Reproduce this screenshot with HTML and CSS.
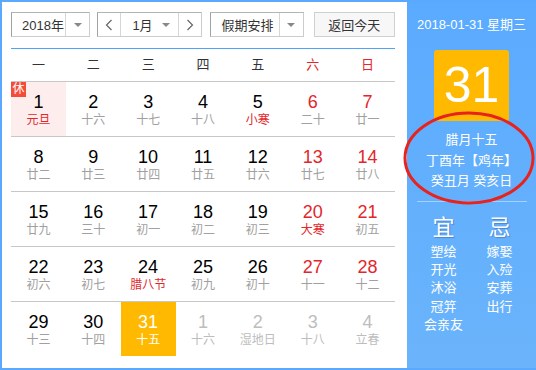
FILE: index.html
```html
<!DOCTYPE html>
<html>
<head>
  <title>万年历</title>
  <link rel="stylesheet" href="styles.css">
</head>
<body>
  <div class="frame">
    <div class="main">
      <div class="toolbar">
        <div class="select year-select">
          <span class="select-label">2018年</span>
          <span class="select-arrow"><i class="caret"></i></span>
        </div>
        <div class="select month-select">
          <span class="nav-btn">
            <svg width="8" height="12" viewBox="0 0 8 12"><polyline points="6.5,1 1.5,6 6.5,11" fill="none" stroke="#666" stroke-width="1.2"/></svg>
          </span>
          <span class="select-label month-label">1月<i class="caret"></i></span>
          <span class="nav-btn">
            <svg width="8" height="12" viewBox="0 0 8 12"><polyline points="1.5,1 6.5,6 1.5,11" fill="none" stroke="#666" stroke-width="1.2"/></svg>
          </span>
        </div>
        <div class="select holiday-select">
          <span class="select-label">假期安排</span>
          <span class="select-arrow"><i class="caret"></i></span>
        </div>
        <button class="today-btn">返回今天</button>
      </div>

      <div class="week-head">
        <span>一</span><span>二</span><span>三</span><span>四</span><span>五</span>
        <span class="red">六</span><span class="red">日</span>
      </div>

      <div class="days">
        <div class="row">
          <div class="cell holiday"><span class="badge">休</span><b>1</b><em class="red">元旦</em></div>
          <div class="cell"><b>2</b><em>十六</em></div>
          <div class="cell"><b>3</b><em>十七</em></div>
          <div class="cell"><b>4</b><em>十八</em></div>
          <div class="cell"><b>5</b><em class="red">小寒</em></div>
          <div class="cell weekend"><b>6</b><em>二十</em></div>
          <div class="cell weekend"><b>7</b><em>廿一</em></div>
        </div>
        <div class="row">
          <div class="cell"><b>8</b><em>廿二</em></div>
          <div class="cell"><b>9</b><em>廿三</em></div>
          <div class="cell"><b>10</b><em>廿四</em></div>
          <div class="cell"><b>11</b><em>廿五</em></div>
          <div class="cell"><b>12</b><em>廿六</em></div>
          <div class="cell weekend"><b>13</b><em>廿七</em></div>
          <div class="cell weekend"><b>14</b><em>廿八</em></div>
        </div>
        <div class="row">
          <div class="cell"><b>15</b><em>廿九</em></div>
          <div class="cell"><b>16</b><em>三十</em></div>
          <div class="cell"><b>17</b><em>初一</em></div>
          <div class="cell"><b>18</b><em>初二</em></div>
          <div class="cell"><b>19</b><em>初三</em></div>
          <div class="cell weekend"><b>20</b><em class="red">大寒</em></div>
          <div class="cell weekend"><b>21</b><em>初五</em></div>
        </div>
        <div class="row">
          <div class="cell"><b>22</b><em>初六</em></div>
          <div class="cell"><b>23</b><em>初七</em></div>
          <div class="cell"><b>24</b><em class="red">腊八节</em></div>
          <div class="cell"><b>25</b><em>初九</em></div>
          <div class="cell"><b>26</b><em>初十</em></div>
          <div class="cell weekend"><b>27</b><em>十一</em></div>
          <div class="cell weekend"><b>28</b><em>十二</em></div>
        </div>
        <div class="row">
          <div class="cell"><b>29</b><em>十三</em></div>
          <div class="cell"><b>30</b><em>十四</em></div>
          <div class="cell today"><b>31</b><em>十五</em></div>
          <div class="cell other"><b>1</b><em>十六</em></div>
          <div class="cell other"><b>2</b><em>湿地日</em></div>
          <div class="cell other"><b>3</b><em>十八</em></div>
          <div class="cell other"><b>4</b><em>立春</em></div>
        </div>
      </div>
    </div>

    <div class="side">
      <div class="side-date">2018-01-31 星期三</div>
      <div class="big-day">31</div>
      <div class="lunar">
        <div>腊月十五</div>
        <div>丁酉年【鸡年】</div>
        <div>癸丑月 癸亥日</div>
      </div>
      <div class="side-line"></div>
      <div class="almanac">
        <div class="alm-col">
          <div class="alm-title">宜</div>
          <div>塑绘</div>
          <div>开光</div>
          <div>沐浴</div>
          <div>冠笄</div>
          <div>会亲友</div>
        </div>
        <div class="alm-col">
          <div class="alm-title">忌</div>
          <div>嫁娶</div>
          <div>入殓</div>
          <div>安葬</div>
          <div>出行</div>
        </div>
      </div>
    </div>

    <svg class="mark" width="140" height="100" viewBox="0 0 140 100">
      <ellipse cx="67" cy="48" rx="64" ry="45" fill="none" stroke="#e8221c" stroke-width="3"/>
    </svg>
  </div>
</body>
</html>
```

FILE: styles.css
```css
body {
  margin: 0;
  font-family: "Liberation Sans", "Noto Sans CJK SC", sans-serif;
  background-color: white;
}

.frame {
  position: relative;
  display: flex;
  width: 536px;
  height: 370px;
  box-sizing: border-box;
  border-top: 2px solid #5aa9ff;
  border-left: 2px solid #5aa9ff;
  border-bottom: 2px solid #5aa9ff;
  overflow: hidden;
}

.main {
  width: 384px;
  padding: 10px 12px 0 9px;
  background-color: white;
}

.toolbar {
  display: flex;
  height: 25px;
  padding-bottom: 11px;
  border-bottom: 1px solid #4ea4fb;
}

.select {
  display: flex;
  box-sizing: border-box;
  height: 25px;
  border: 1px solid #cccccc;
  border-left-color: #a2a2a2;
  border-top-color: #b4b4b4;
  font-size: 13px;
  color: #333;
  background-color: white;
  white-space: nowrap;
}

.select-label {
  display: flex;
  align-items: center;
  padding-left: 10px;
  flex: 1;
}

.select-arrow {
  display: flex;
  align-items: center;
  justify-content: center;
  width: 23px;
  border-left: 1px solid #d6d6d6;
}

.caret {
  display: inline-block;
  width: 0;
  height: 0;
  border-left: 4px solid transparent;
  border-right: 4px solid transparent;
  border-top: 4px solid #888;
}

.year-select {
  width: 80px;
  margin-right: 7px;
}

.month-select {
  width: 105px;
  margin-right: 8px;
}

.nav-btn {
  display: flex;
  align-items: center;
  justify-content: center;
  flex: none;
  width: 22px;
}

.month-label {
  flex: none;
  width: 59px;
  box-sizing: border-box;
  padding: 0 8px 0 11px;
  border-left: 1px solid #d6d6d6;
  border-right: 1px solid #d6d6d6;
}

.month-label .caret {
  margin-left: auto;
}

.holiday-select {
  width: 94px;
  margin-right: 10px;
}

.today-btn {
  width: 82px;
  height: 25px;
  padding: 0;
  border: 1px solid #d0d0d0;
  background-color: #f7f7f7;
  font-family: inherit;
  font-size: 13px;
  color: #333;
}

.week-head {
  display: grid;
  grid-template-columns: repeat(7, 1fr);
  height: 32px;
  border-bottom: 1px solid #c8c8c8;
  font-size: 13px;
  color: #333;
  text-align: center;
  line-height: 32px;
}

.red {
  color: #e3262b;
}

.row {
  display: grid;
  grid-template-columns: repeat(7, 1fr);
  border-bottom: 1px solid #c8c8c8;
}

.row:last-child {
  border-bottom: none;
}

.cell {
  position: relative;
  height: 54px;
  box-sizing: border-box;
  padding-top: 10px;
  text-align: center;
}

.cell b {
  display: block;
  font-weight: normal;
  font-size: 18px;
  line-height: 20px;
  color: black;
}

.cell em {
  display: block;
  font-style: normal;
  font-size: 12px;
  line-height: 16px;
  color: #a0a0a0;
}

.cell em.red {
  color: #e3262b;
}

.weekend b {
  color: #e3262b;
}

.holiday {
  background-color: #fdeded;
}

.badge {
  position: absolute;
  top: 0;
  left: 0;
  width: 15px;
  height: 15px;
  background-color: #f44c38;
  color: white;
  font-size: 12px;
  line-height: 15px;
}

.today {
  background-color: #ffb900;
}

.today b,
.today em {
  color: white;
}

.other b,
.other em {
  color: #bdbdbd;
}

.side {
  flex: 1;
  margin-top: -2px;
  margin-bottom: -2px;
  padding-top: 17px;
  background: linear-gradient(#5aaaff, #6bb4fb);
  color: white;
  text-align: center;
}

.side-date {
  font-size: 13px;
  line-height: 16px;
}

.big-day {
  width: 75px;
  height: 71px;
  margin: 17px auto 0;
  border-radius: 3px;
  background-color: #ffb900;
  font-size: 50px;
  line-height: 71px;
}

.lunar {
  margin-top: 9px;
  font-size: 13px;
  line-height: 20.5px;
}

.side-line {
  width: 110px;
  height: 1px;
  margin: 9px auto 0;
  background-color: #a4d1ff;
}

.almanac {
  display: flex;
  justify-content: center;
  margin-top: 14px;
}

.alm-col {
  width: 56px;
  font-size: 13px;
  line-height: 18.4px;
}

.alm-title {
  font-size: 22px;
  line-height: 24px;
  margin-bottom: 3px;
  text-shadow: 1px 1px 1px rgba(0, 0, 80, 0.25);
}

.mark {
  position: absolute;
  left: 400px;
  top: 108px;
}
```
